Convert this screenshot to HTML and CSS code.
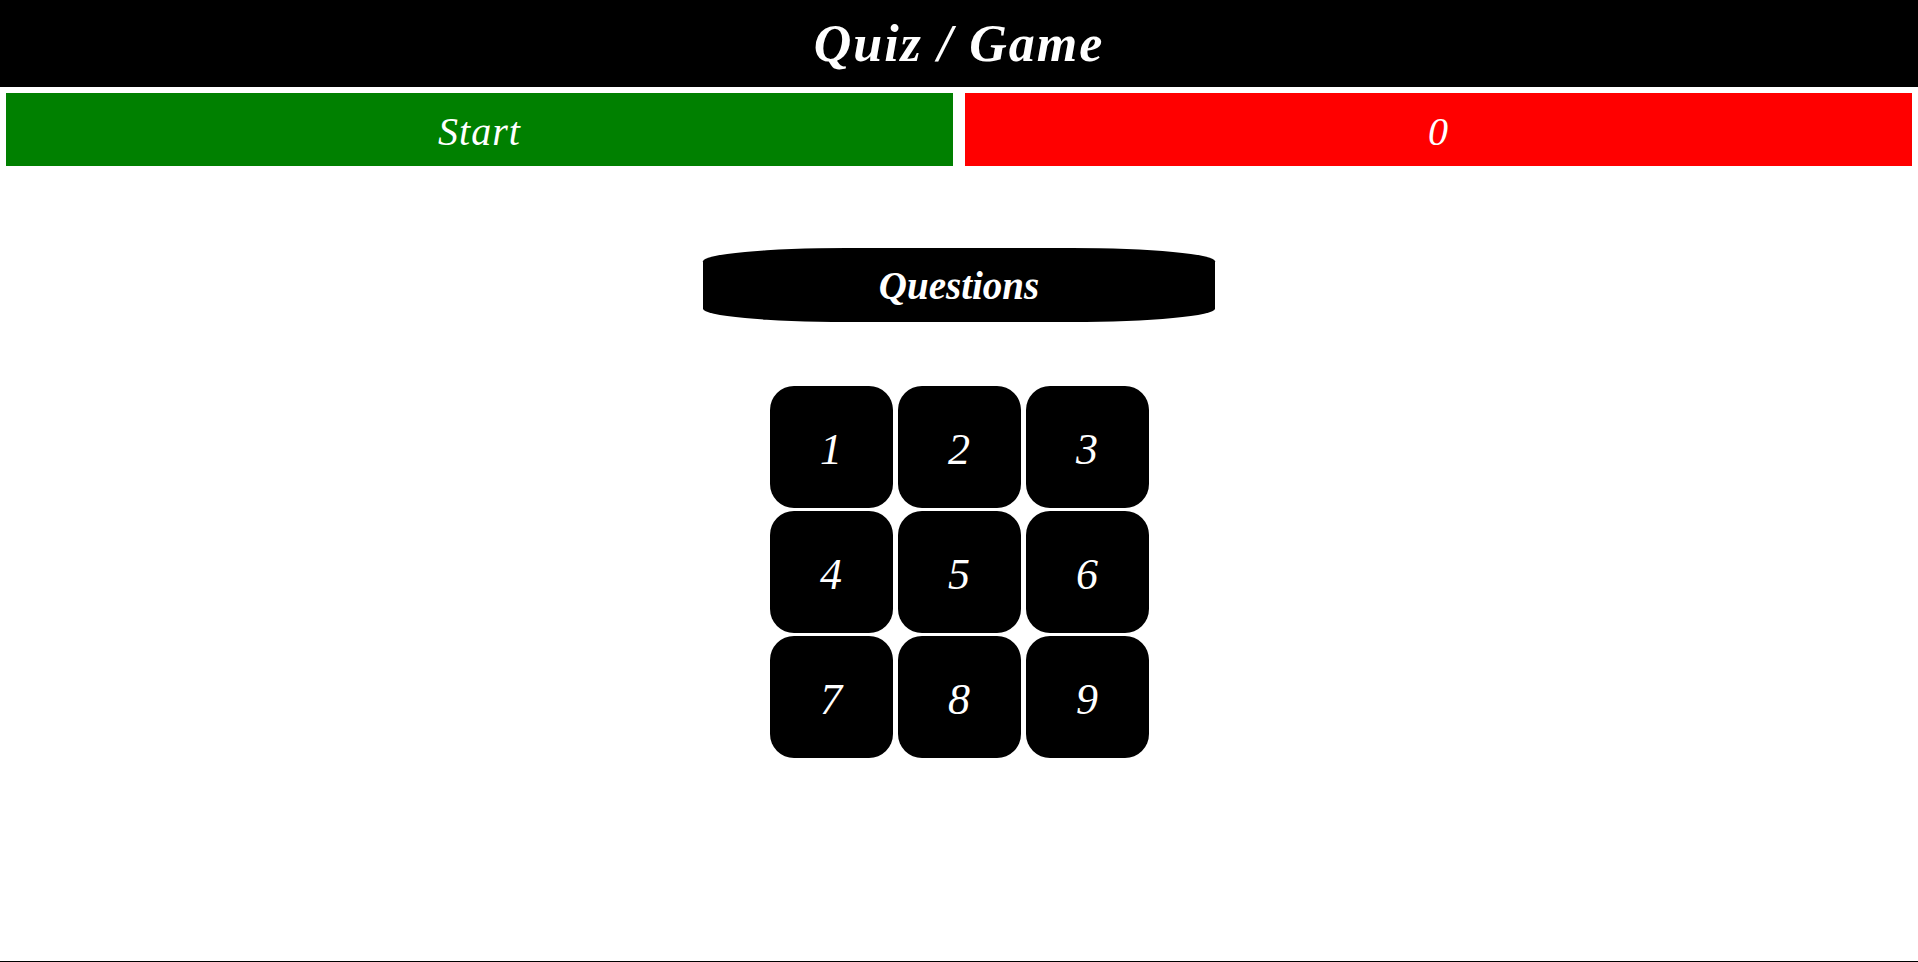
FILE: index.html
```html
<!DOCTYPE html>
<html>
<head>
<meta charset="utf-8">
<title>Quiz / Game</title>
<link rel="stylesheet" href="styles.css">
</head>
<body>
<div class="page">
  <header class="topbar"><h1 class="title">Quiz / Game</h1></header>
  <div class="controls">
    <button class="ctrl start">Start</button>
    <div class="ctrl score">0</div>
  </div>
  <div class="pill">Questions</div>
  <div class="grid">
    <button class="tile">1</button>
    <button class="tile">2</button>
    <button class="tile">3</button>
    <button class="tile">4</button>
    <button class="tile">5</button>
    <button class="tile">6</button>
    <button class="tile">7</button>
    <button class="tile">8</button>
    <button class="tile">9</button>
  </div>
</div>
</body>
</html>
```
FILE: styles.css
```css
html, body {
  margin: 0;
  padding: 0;
  background: #fff;
}
body {
  font-family: "Liberation Serif", "Times New Roman", serif;
  font-style: italic;
  color: #fff;
}
.page {
  height: 962px;
  box-sizing: border-box;
  border-bottom: 1px solid #000;
  display: flex;
  flex-direction: column;
}
.topbar {
  background: #000;
  height: 87px;
  display: flex;
  align-items: center;
  justify-content: center;
}
.title {
  margin: 0;
  font-size: 52px;
  font-weight: bold;
  font-style: italic;
  letter-spacing: 2px;
}
.controls {
  display: flex;
  gap: 12px;
  padding: 6px;
}
.ctrl {
  flex: 1;
  box-sizing: border-box;
  height: 73px;
  border: none;
  margin: 0;
  padding: 4px 0 0;
  color: #fff;
  font-family: inherit;
  font-style: italic;
  font-size: 40px;
  letter-spacing: 1px;
  display: flex;
  align-items: center;
  justify-content: center;
}
.start { background: #008000; }
.score { background: #ff0000; }
.pill {
  margin: 76px auto 0;
  width: 512px;
  height: 74px;
  background: #000;
  border-radius: 28% / 18%;
  display: flex;
  align-items: center;
  justify-content: center;
  font-size: 39px;
  font-weight: bold;
}
.grid {
  margin: 64px auto 0;
  display: grid;
  grid-template-columns: repeat(3, 123px);
  grid-auto-rows: 122px;
  column-gap: 5px;
  row-gap: 3px;
}
.tile {
  background: #000;
  color: #fff;
  border: none;
  border-radius: 24px;
  font-family: inherit;
  font-style: italic;
  font-size: 44px;
  padding: 4px 0 0;
}
```
